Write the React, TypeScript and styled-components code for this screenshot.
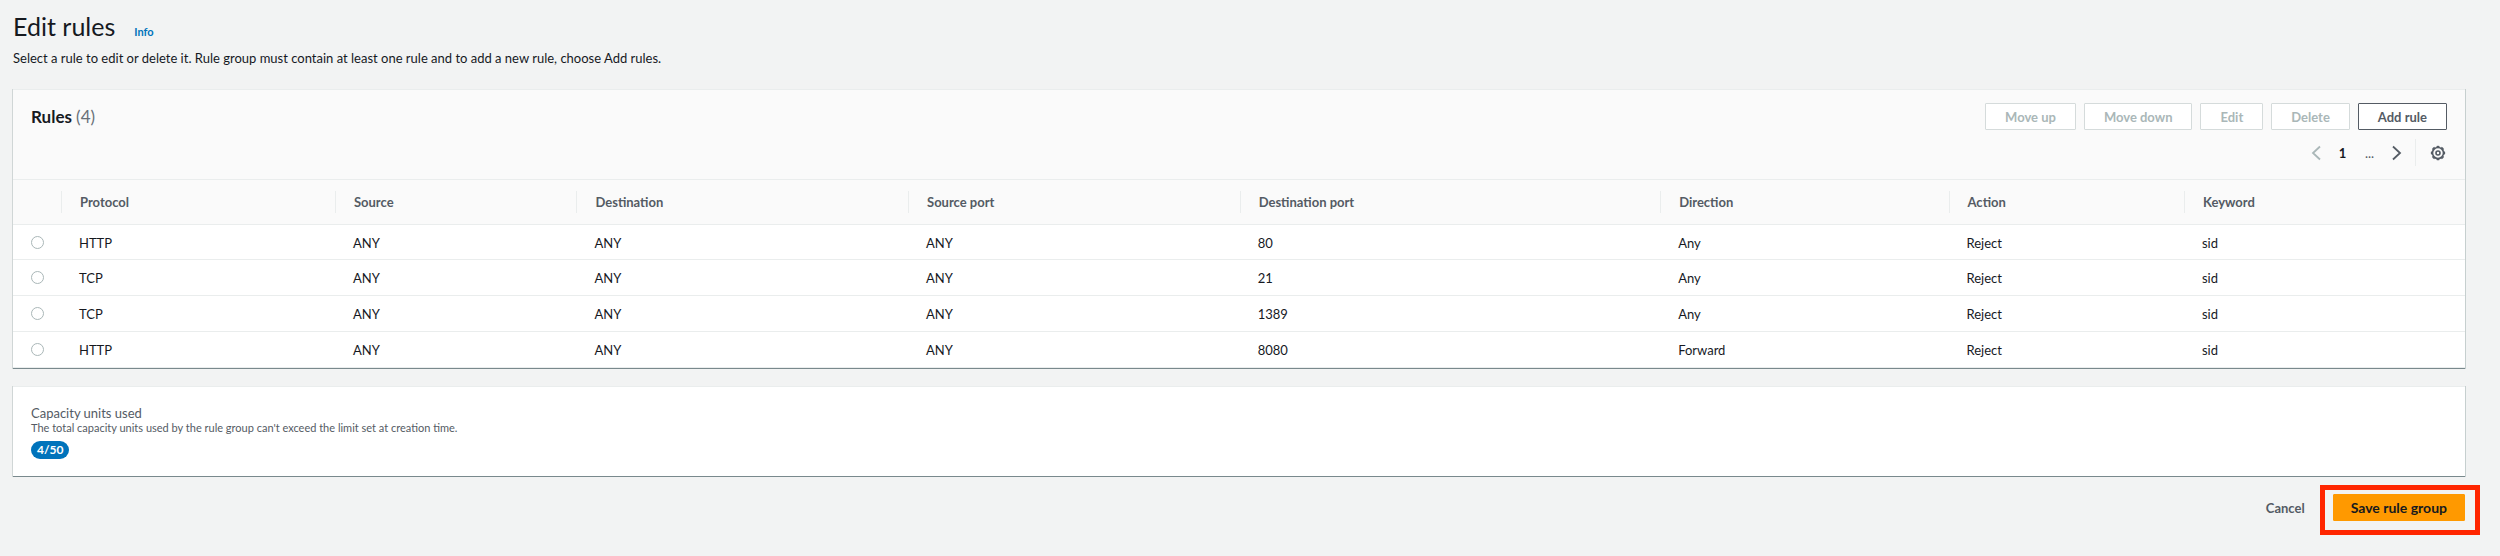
import React from "react";
import styled, { createGlobalStyle } from "styled-components";

const GlobalStyle = createGlobalStyle`
  *, *::before, *::after { box-sizing: border-box; }
  body {
    margin: 0;
    background: #f2f3f3;
    color: #16191f;
    font-family: Lato, "Noto Sans", sans-serif;
    font-size: 13px;
    line-height: 20px;
  }
  button, input { font: inherit; margin: 0; }
`;

const Page = styled.main`
  padding: 11px 35px 35px 13px;
`;

const PageHeader = styled.header`
  margin-bottom: 21px;
`;

const TitleRow = styled.div`
  display: flex;
  align-items: baseline;
  gap: 19px;
  height: 30px;
`;

const Title = styled.h1`
  margin: 0;
  font-size: 25px;
  line-height: 30px;
  font-weight: 400;
`;

const InfoLink = styled.a`
  color: #0073bb;
  font-size: 11px;
  font-weight: 700;
  line-height: 14px;
  text-decoration: none;
`;

const Description = styled.p`
  margin: 7px 0 0;
`;

const Panel = styled.section`
  margin-bottom: 17px;
  background: #fff;
  border-top: 1px solid #eaeded;
  border-bottom: 1px solid #79898d;
  box-shadow: -1px 0 0 #d0d6d6, 1px 0 0 #c6cfcf;
`;

const PanelHeader = styled.div`
  display: flex;
  flex-direction: column;
  gap: 9px;
  padding: 13px 18px;
  background: #fafafa;
  border-bottom: 1px solid #eaeded;
`;

const HeaderLine = styled.div`
  display: flex;
  align-items: center;
  justify-content: space-between;
  height: 27px;
`;

const PanelTitle = styled.h2`
  margin: 0;
  font-size: 17px;
  font-weight: 700;
`;

const Counter = styled.span`
  color: #687078;
  font-weight: 400;
`;

const ButtonGroup = styled.div`
  display: flex;
  gap: 8px;
`;

const Button = styled.button<{ $variant?: "normal" | "link" | "primary" }>`
  display: block;
  height: 27px;
  padding: 0 ${({ $variant }) => ($variant === "primary" ? 17 : 19)}px;
  border: 1px solid
    ${({ $variant = "normal" }) =>
      ({ normal: "#545b64", link: "transparent", primary: "#ff9900" })[$variant]};
  border-radius: 1px;
  background: ${({ $variant = "normal" }) =>
    ({ normal: "#fff", link: "transparent", primary: "#ff9900" })[$variant]};
  color: ${({ $variant }) => ($variant === "primary" ? "#16191f" : "#545b64")};
  font-size: ${({ $variant }) => ($variant === "primary" ? 14 : 13)}px;
  font-weight: 700;
  white-space: nowrap;

  &:disabled {
    border-color: #d5dbdb;
    color: #aab7b8;
  }
`;

const Pagination = styled.nav`
  display: flex;
  align-items: center;
  justify-content: flex-end;
  height: 27px;
`;

const PageItem = styled.button`
  display: flex;
  align-items: center;
  justify-content: center;
  width: 27px;
  height: 27px;
  padding: 0;
  border: 0;
  background: none;
  color: #545b64;

  &:disabled { color: #aab7b8; }
  &[aria-current] { color: #16191f; font-weight: 700; }
`;

const Ellipsis = styled.span`
  width: 27px;
  text-align: center;
  color: #545b64;
`;

const SettingsButton = styled(PageItem)`
  width: 32px;
  margin-left: 5px;
  padding-left: 13px;
  border-left: 1px solid #eaeded;
`;

const Table = styled.table`
  width: 100%;
  table-layout: fixed;
  border-collapse: separate;
  border-spacing: 0;
`;

const Col = styled.col<{ $share: number }>`
  width: ${({ $share }) => $share}%;
`;

const SelectCol = styled.col`
  width: 49px;
`;

const HeadCell = styled.th`
  position: relative;
  height: 45px;
  padding: 0 18px;
  background: #fafafa;
  border-bottom: 1px solid #eaeded;
  color: #545b64;
  font-weight: 700;
  text-align: left;

  &:not(:last-child)::after {
    content: "";
    position: absolute;
    top: 11px;
    right: 0;
    bottom: 11px;
    border-right: 1px solid #eaeded;
  }
`;

const Row = styled.tr`
  height: 36px;

  &:first-child { height: 35px; }
`;

const Cell = styled.td`
  padding: 1px 17px 0;
  border-bottom: 1px solid #eaeded;
`;

const SelectCell = styled(Cell)`
  padding: 0 18px;
`;

const Radio = styled.input`
  display: block;
  width: 13px;
  height: 13px;
  appearance: none;
  border: 1px solid #aab7b8;
  border-radius: 50%;
  background: #fff;

  &:checked { border: 4px solid #0073bb; }
`;

const CapacityBody = styled.div`
  padding: 18px 18px 17px;
  color: #545b64;
`;

const CapacityLabel = styled.div`
  line-height: 16px;
`;

const CapacityHint = styled.div`
  font-size: 11px;
  line-height: 14px;
`;

const Badge = styled.span`
  display: block;
  width: fit-content;
  margin-top: 6px;
  padding: 0 6px;
  border-radius: 9px;
  background: #0073bb;
  color: #fff;
  font-size: 12px;
  font-weight: 700;
  line-height: 18px;
`;

const Footer = styled.footer`
  display: flex;
  justify-content: flex-end;
  gap: 8px;
`;

const Highlight = styled.div`
  position: relative;

  &::after {
    content: "";
    position: absolute;
    inset: -9px -15px -14px -13px;
    border: 5px solid #ff2600;
    pointer-events: none;
  }
`;

const Chevron = ({ d }: { d: string }) => (
  <svg width="16" height="16" viewBox="0 0 16 16" fill="none" stroke="currentColor" strokeWidth="1.8" aria-hidden="true">
    <path d={d} />
  </svg>
);

const Gear = () => (
  <svg width="16" height="16" viewBox="0 0 16 16" fill="none" stroke="currentColor" aria-hidden="true">
    <circle cx="8" cy="8" r="5.5" strokeWidth="1.6" />
    <circle cx="8" cy="8" r="6.5" strokeWidth="1.3" pathLength="80" strokeDasharray="6 4" strokeDashoffset="3" />
    <circle cx="8" cy="8" r="2" strokeWidth="1.6" />
  </svg>
);

const COLUMNS: [string, number][] = [
  ["Protocol", 11.4],
  ["Source", 10.05],
  ["Destination", 13.8],
  ["Source port", 13.8],
  ["Destination port", 17.5],
  ["Direction", 12],
  ["Action", 9.8],
  ["Keyword", 11.65],
];

const RULES = [
  ["HTTP", "ANY", "ANY", "ANY", "80", "Any", "Reject", "sid"],
  ["TCP", "ANY", "ANY", "ANY", "21", "Any", "Reject", "sid"],
  ["TCP", "ANY", "ANY", "ANY", "1389", "Any", "Reject", "sid"],
  ["HTTP", "ANY", "ANY", "ANY", "8080", "Forward", "Reject", "sid"],
];

export default function App() {
  return (
    <>
      <GlobalStyle />
      <Page>
        <PageHeader>
          <TitleRow>
            <Title>Edit rules</Title>
            <InfoLink href="#info">Info</InfoLink>
          </TitleRow>
          <Description>
            Select a rule to edit or delete it. Rule group must contain at least one rule and to add a new rule, choose Add rules.
          </Description>
        </PageHeader>

        <Panel>
          <PanelHeader>
            <HeaderLine>
              <PanelTitle>
                Rules <Counter>(4)</Counter>
              </PanelTitle>
              <ButtonGroup>
                <Button disabled>Move up</Button>
                <Button disabled>Move down</Button>
                <Button disabled>Edit</Button>
                <Button disabled>Delete</Button>
                <Button>Add rule</Button>
              </ButtonGroup>
            </HeaderLine>
            <Pagination aria-label="Pagination">
              <PageItem disabled aria-label="Previous page">
                <Chevron d="M12 1.5 5 8l7 6.5" />
              </PageItem>
              <PageItem aria-current="page">1</PageItem>
              <Ellipsis>...</Ellipsis>
              <PageItem aria-label="Next page">
                <Chevron d="M4 1.5 11 8l-7 6.5" />
              </PageItem>
              <SettingsButton aria-label="Preferences">
                <Gear />
              </SettingsButton>
            </Pagination>
          </PanelHeader>
          <Table>
            <colgroup>
              <SelectCol />
              {COLUMNS.map(([name, share]) => (
                <Col key={name} $share={share} />
              ))}
            </colgroup>
            <thead>
              <tr>
                <HeadCell aria-label="Selection" />
                {COLUMNS.map(([name]) => (
                  <HeadCell key={name} scope="col">{name}</HeadCell>
                ))}
              </tr>
            </thead>
            <tbody>
              {RULES.map((rule, i) => (
                <Row key={i}>
                  <SelectCell>
                    <Radio type="radio" name="rule" aria-label={`Select rule ${i + 1}`} />
                  </SelectCell>
                  {rule.map((value, j) => (
                    <Cell key={j}>{value}</Cell>
                  ))}
                </Row>
              ))}
            </tbody>
          </Table>
        </Panel>

        <Panel>
          <CapacityBody>
            <CapacityLabel>Capacity units used</CapacityLabel>
            <CapacityHint>
              The total capacity units used by the rule group can't exceed the limit set at creation time.
            </CapacityHint>
            <Badge>4/50</Badge>
          </CapacityBody>
        </Panel>

        <Footer>
          <Button $variant="link">Cancel</Button>
          <Highlight>
            <Button $variant="primary">Save rule group</Button>
          </Highlight>
        </Footer>
      </Page>
    </>
  );
}
